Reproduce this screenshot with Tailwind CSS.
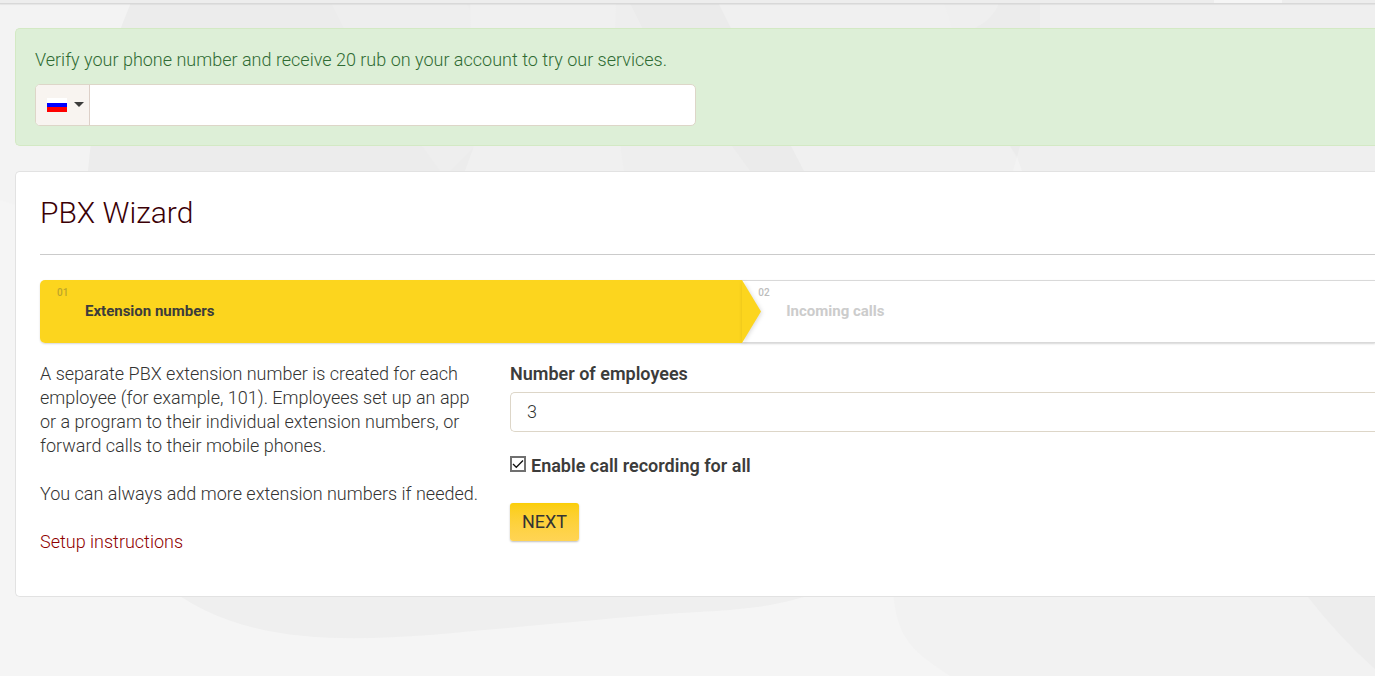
<!DOCTYPE html>
<html lang="en">
<head>
<meta charset="utf-8">
<meta name="viewport" content="width=device-width, initial-scale=1">
<title>PBX Wizard</title>
<script src="https://cdn.jsdelivr.net/npm/@tailwindcss/browser@4"></script>
</head>
<body class="relative min-h-screen overflow-hidden bg-[#f5f5f5] font-['Roboto',sans-serif] text-lg leading-6 font-light text-[#333332]">
  <!-- Decorative backdrop -->
  <svg class="absolute inset-0 -z-10 h-full w-full" viewBox="0 0 1375 676" preserveAspectRatio="xMinYMin slice" aria-hidden="true">
    <path d="M0 0H1375V300H15V205L0 200Z" fill="#f3f3f3"/>
    <path d="M132 0Q94 90 88 171V300H500V0Z" fill="#ececec"/>
    <path d="M330 0L360 60L440 171H450L475 146L480 28L465 0Z" fill="#eeeeee"/>
    <path d="M470 0H1375V240H440L474 146Z" fill="#f0f0f0"/>
    <path d="M616 0Q612 100 624 171V240H760V171L642 28L628 0Z" fill="#eeeeee"/>
    <path d="M628 0L642 28L732 146L750 171H804L791 146L731 28L717 0Z" fill="#ebebeb"/>
    <path d="M943 0L952 28L1010 146L1022 171H1375V0Z" fill="#efefef"/>
    <path d="M1000 0H1040V28H975Q995 18 1000 0Z" fill="#ececec"/>
    <path d="M1010 146H1020L1017 157Z" fill="#ebebeb"/>
    <path d="M1017 157L1022 171H1013Z" fill="#f3f3f3"/>
    <path d="M158 580C230 640 320 643 430 635C520 627 600 619 680 613C750 609 775 608 835 587V580Z" fill="#efefef"/>
    <path d="M893 580C893 640 915 652 950 676H1375V580Z" fill="#f2f2f2"/>
    <path d="M1295 580L1308 597Q1340 638 1375 669V580Z" fill="#ededed"/>
  </svg>

  <header class="flex h-1 border-b border-[#d8d8d8] bg-[#ededed] shadow-[0_1px_1px_rgba(0,0,0,0.06)]">
    <div class="ml-[88.3%] h-full w-[68px] bg-[#f5f5f5]"></div>
  </header>

  <main class="flex flex-col gap-[25px] pt-6 pl-[15px]">
    <section class="flex flex-col gap-3 rounded-l-[5px] border border-r-0 border-[#d3e9c4] bg-[#ddefd7] p-[19px]">
      <label for="phone" class="text-[#2f6b33]">Verify your phone number and receive 20 rub on your account to try our services.</label>
      <div class="flex h-[42px] w-[661px] max-w-full overflow-hidden rounded-[5px] border border-[#ddd6c8] bg-white">
        <button type="button" aria-label="Country code: Russia" class="flex w-[54px] shrink-0 items-center gap-[7px] border-r border-[#ddd0c8] bg-[#f8f4f0] pl-[11px]">
          <svg class="h-[14px] w-5" viewBox="0 0 20 14" aria-hidden="true">
            <path d="M0 0H20V5H0Z" fill="#fff"/>
            <path d="M0 5H20V10H0Z" fill="#0000fe"/>
            <path d="M0 9H20V14H0Z" fill="#fe0000"/>
          </svg>
          <svg class="mb-[2px] h-[5px] w-[10px]" viewBox="0 0 10 5" aria-hidden="true"><path d="M0 0H10L5 5Z" fill="#3c3c3b"/></svg>
        </button>
        <input id="phone" type="tel" class="min-w-0 flex-1 px-4 outline-none">
      </div>
    </section>

    <section class="rounded-l-[5px] border border-r-0 border-[#e2e2e2] bg-white pt-[23px] pb-[42px] pl-6">
      <h1 class="text-[30px] leading-9 text-[#3b0006]">PBX Wizard</h1>
      <hr class="mt-[23px] border-[#cbcbcb]">

      <ol class="mt-[25px] flex h-[63px] rounded-l-[5px] shadow-[0_1px_2px_rgba(0,0,0,0.16)]">
        <li class="relative w-[52.6%] rounded-l-[5px] bg-[#fcd51e] px-[17px] pt-[7px]">
          <span class="block text-[10px] leading-3 font-medium text-[#bda52b]">01</span>
          <span class="ml-7 block text-[15px] leading-6 font-bold text-[#3c3c3b]">Extension numbers</span>
          <svg class="absolute top-0 left-full h-full w-[19px] drop-shadow-[1px_1px_2px_rgba(0,0,0,0.15)]" viewBox="0 0 19 63" preserveAspectRatio="none" aria-hidden="true"><path d="M0 0L19 31.5L0 63Z" fill="#fcd51e"/></svg>
        </li>
        <li class="flex-1 border-t border-b border-[#d9d9d9] px-4 pt-[6px]">
          <span class="block text-[10px] leading-3 font-medium text-[#bcbcbc]">02</span>
          <span class="ml-7 block text-[15px] leading-6 font-bold text-[#cccccc]">Incoming calls</span>
        </li>
      </ol>

      <form class="mt-[19px] grid grid-cols-[440px_1fr] gap-[30px]">
        <div class="flex flex-col items-start gap-6">
          <p>A separate PBX extension number is created for each employee (for example, 101). Employees set up an app or a program to their individual extension numbers, or forward calls to their mobile phones.</p>
          <p>You can always add more extension numbers if needed.</p>
          <a href="#" class="text-[#8f0000]">Setup instructions</a>
        </div>
        <div class="flex flex-col items-start">
          <label for="employees" class="font-semibold text-[#3c3c3b]">Number of employees</label>
          <input id="employees" type="text" value="3" class="mt-[6px] h-10 w-full rounded-l-[5px] border border-r-0 border-[#ddd6c8] bg-white px-4 pb-px outline-none">
          <label for="record" class="mt-[22px] flex items-center gap-[5px] font-semibold text-[#3c3c3b]">
            <span class="grid pb-1">
              <input id="record" type="checkbox" checked class="col-start-1 row-start-1 size-4 appearance-none border-2 border-[#707070] bg-white">
              <svg class="pointer-events-none col-start-1 row-start-1 size-4" viewBox="0 0 16 16" fill="none" stroke="#111" aria-hidden="true"><path d="M3 8L6.300 11.300L13 4.500" stroke-width="1.300"/></svg>
            </span>
            Enable call recording for all
          </label>
          <button type="button" class="mt-[25px] h-[38px] rounded-[3px] bg-linear-to-b from-[#fbce04] to-[#ffd454] px-3 font-normal text-[#333] shadow-[0_1px_2px_rgba(0,0,0,0.25)]">NEXT</button>
        </div>
      </form>
    </section>
  </main>
</body>
</html>
